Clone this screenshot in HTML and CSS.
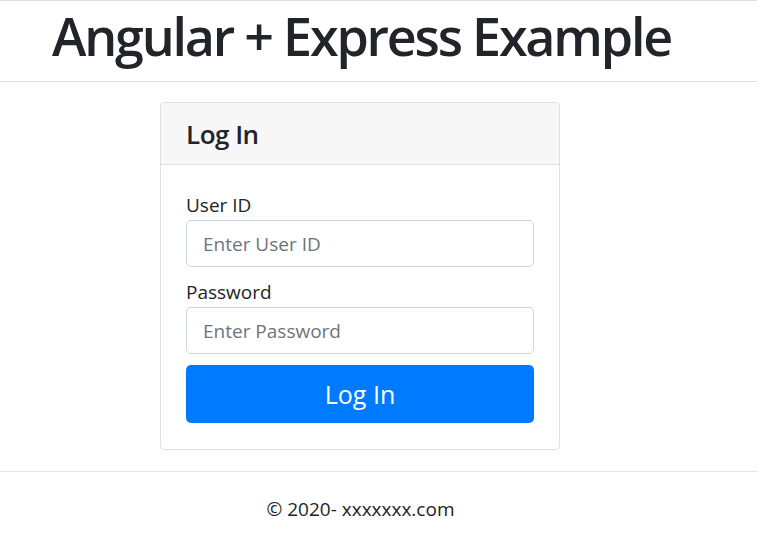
FILE: index.html
```html
<!DOCTYPE html>
<html lang="en">
<head>
<meta charset="utf-8">
<title>Angular + Express Example</title>
<link rel="stylesheet" href="styles.css">
</head>
<body>
<header class="topbar">
  <h1 class="title">Angular + Express Example</h1>
</header>
<main class="content">
  <section class="card">
    <div class="card-header"><h3 class="card-title">Log In</h3></div>
    <form class="card-body">
      <div class="form-group">
        <label class="label" for="uid">User ID</label>
        <input class="input" id="uid" type="text" placeholder="Enter User ID">
      </div>
      <div class="form-group">
        <label class="label" for="pwd">Password</label>
        <input class="input" id="pwd" type="password" placeholder="Enter Password">
      </div>
      <button class="btn" type="button">Log In</button>
    </form>
  </section>
</main>
<footer class="footer">
  <p class="copy">© 2020- xxxxxxx.com</p>
</footer>
</body>
</html>
```

FILE: styles.css
```css
* { box-sizing: border-box; }
html, body { margin: 0; padding: 0; background: #fff; }
body {
  font-family: "Open Sans", "Noto Sans", sans-serif;
  color: #212529;
  font-size: 20px;
  line-height: 1.5;
}
.topbar {
  border-top: 1px solid #dee2e6;
  border-bottom: 1px solid #dee2e6;
  height: 82px;
  padding: 4px 0 0 52px;
}
.title {
  margin: 0;
  font-size: 52px;
  font-weight: 600;
  line-height: 62px;
  letter-spacing: -2.2px;
}
.content {
  padding: 20px 0 21px 160px;
}
.card {
  width: 400px;
  border: 1px solid #dfdfdf;
  border-radius: 4px;
  background: #fff;
}
.card-header {
  height: 62px;
  background: #f7f7f7;
  border-bottom: 1px solid #dfdfdf;
  border-radius: 4px 4px 0 0;
  padding: 0 25px;
}
.card-title {
  margin: 0;
  font-size: 26px;
  font-weight: 600;
  line-height: 62px;
  letter-spacing: -0.5px;
}
.card-body {
  padding: 25px 25px 26px;
}
.form-group { margin-bottom: 10px; }
.label {
  display: block;
  font-size: 19px;
  line-height: 30px;
}
.input {
  display: block;
  width: 100%;
  height: 47px;
  padding: 0 16px;
  border: 1px solid #ced4da;
  border-radius: 5px;
  font-family: inherit;
  font-size: 19px;
  color: #495057;
  background: #fff;
}
.input::placeholder { color: #6c757d; }
.btn {
  display: block;
  width: 100%;
  height: 58px;
  margin-top: 11px;
  border: 0;
  border-radius: 5px;
  background: #007bff;
  color: #fff;
  font-family: inherit;
  font-size: 25px;
}
.footer {
  border-top: 1px solid #e5e5e5;
  padding-right: 36px;
  text-align: center;
}
.copy {
  margin: 0;
  padding: 22px 0 0 0;
  font-size: 19px;
  line-height: 30px;
  letter-spacing: 0;
}
```
